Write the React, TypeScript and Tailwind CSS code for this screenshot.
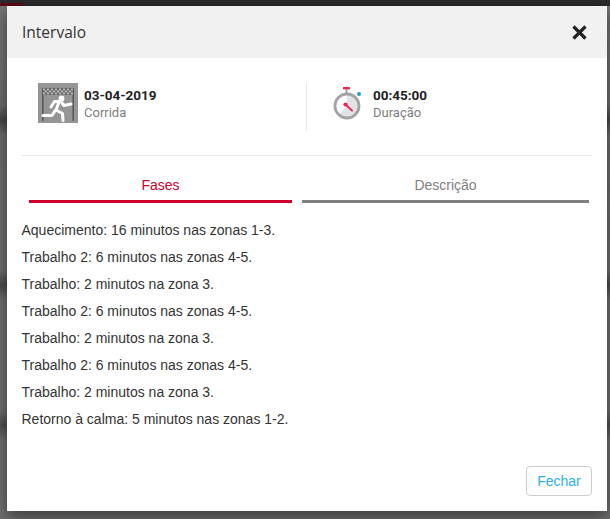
const phases = [
  'Aquecimento: 16 minutos nas zonas 1-3.',
  'Trabalho 2: 6 minutos nas zonas 4-5.',
  'Trabalho: 2 minutos na zona 3.',
  'Trabalho 2: 6 minutos nas zonas 4-5.',
  'Trabalho: 2 minutos na zona 3.',
  'Trabalho 2: 6 minutos nas zonas 4-5.',
  'Trabalho: 2 minutos na zona 3.',
  'Retorno à calma: 5 minutos nas zonas 1-2.',
];

const checkerCols = Array.from({ length: 15 }, (_, i) => i);
const checkerRows = [0, 1, 2];

function RaceIcon() {
  return (
    <svg width="40" height="40" viewBox="0 0 40 40" className="shrink-0">
      <rect width="40" height="40" fill="#959595" />
      <rect x="4" y="5" width="1.6" height="33" fill="#5a5a5a" />
      <rect x="34.4" y="5" width="1.6" height="33" fill="#5a5a5a" />
      <rect x="5" y="5" width="30" height="7" fill="#666" />
      {checkerRows.map((r) =>
        checkerCols.map((c) =>
          (r + c) % 2 === 0 ? (
            <rect key={`${r}-${c}`} x={5 + c * 2} y={5.5 + r * 2} width="2" height="2" fill="#b8b8b8" />
          ) : null,
        ),
      )}
      <circle cx="23.5" cy="15.5" r="2.9" fill="#fff" />
      <path
        d="M13 24l3.5-5.5h6.5l3 4 7-1.5M21 19l-3 8 6.5 3.5 .5 7M17.5 27l-3.5 5.5H5"
        fill="none"
        stroke="#fff"
        strokeWidth="3"
        strokeLinecap="round"
        strokeLinejoin="round"
      />
    </svg>
  );
}

function TimerIcon() {
  return (
    <svg width="30" height="34" viewBox="0 0 30 34" className="shrink-0">
      <rect x="10" y="0" width="7" height="2.4" fill="#f0284f" />
      <rect x="12.5" y="2" width="2" height="4" fill="#a0a0a0" />
      <circle cx="26" cy="7" r="2" fill="#1a9ce0" />
      <circle cx="14" cy="19" r="12" fill="#e1e3e6" />
      <path d="M14 7a12 12 0 0 0 -8.5 20.5L14 19z" fill="#fff" />
      <circle cx="14" cy="19" r="12" fill="none" stroke="#a3a3a3" strokeWidth="2.8" />
      <path d="M12.5 17.5L19 23.5" stroke="#f0284f" strokeWidth="2" strokeLinecap="round" />
      <circle cx="12.5" cy="17.5" r="2.1" fill="#f0284f" />
    </svg>
  );
}

export default function App() {
  return (
    <div className="h-[519px] w-[610px] overflow-hidden bg-[linear-gradient(180deg,#777_0px,#6e6e6e_105px,#484848_120px,#6e6e6e_135px,#707070_270px,#4c4c4c_285px,#707070_300px,#707070_410px,#505050_425px,#707070_440px,#707070_519px)]">
      <div className="h-[6px] bg-[#2b2b2b] pt-[3px]">
        <div className="h-[3px] w-[23px] bg-[#5e0a16]" />
      </div>
      <div className="ml-[7px] flex h-[505px] w-[600px] flex-col bg-white shadow-[0_5px_15px_rgba(0,0,0,0.5)]">
        <div className="flex h-[52px] items-center justify-between bg-[#f1f1f1] pl-[15px] pr-[20px]">
          <span className="pt-[1px] font-['Open_Sans',sans-serif] text-[15.5px] text-[#333]">Intervalo</span>
          <svg width="15" height="15" viewBox="0 0 15 15">
            <path d="M1.5 1.5l12 12M13.5 1.5l-12 12" stroke="#222" strokeWidth="3.2" />
          </svg>
        </div>

        <div className="mx-[15px] flex h-[98px] border-b border-[#e6e6e6] pt-[25px]">
          <div className="flex h-[48px] w-[285px] items-start gap-[6px] border-r border-[#e6e6e6] pl-[16px]">
            <RaceIcon />
            <div className="pt-[4px] font-['Roboto',sans-serif] leading-[17px]">
              <div className="text-[13.5px] font-bold text-[#222]">03-04-2019</div>
              <div className="text-[13px] text-[#7d7d7d]">Corrida</div>
            </div>
          </div>
          <div className="flex items-start gap-[10px] pl-[26px] pt-[4px]">
            <TimerIcon />
            <div className="font-['Roboto',sans-serif] leading-[17px]">
              <div className="text-[13.5px] font-bold text-[#222]">00:45:00</div>
              <div className="text-[13px] text-[#7d7d7d]">Duração</div>
            </div>
          </div>
        </div>

        <div className="flex gap-[10px] pl-[22px] pt-[18px] font-['Liberation_Sans',sans-serif] text-[14px]">
          <div className="h-[29px] w-[263px] border-b-[3px] border-[#d0002b] text-center leading-[23px] text-[#d0002b]">
            Fases
          </div>
          <div className="h-[29px] w-[287px] border-b-[3px] border-[#808080] text-center leading-[23px] text-[#808080]">
            Descrição
          </div>
        </div>

        <div className="flex-1 pl-[14.5px] pt-[14px] font-['Liberation_Sans',sans-serif] text-[14px] leading-[27px] text-[#333]">
          {phases.map((p, i) => (
            <div key={i}>{p}</div>
          ))}
        </div>

        <div className="flex justify-end pb-[15px] pr-[15px]">
          <button className="h-[30px] w-[66px] rounded-[4px] border border-[#cccccc] bg-white font-['Liberation_Sans',sans-serif] text-[14px] text-[#2eaef0]">
            Fechar
          </button>
        </div>
      </div>
    </div>
  );
}
